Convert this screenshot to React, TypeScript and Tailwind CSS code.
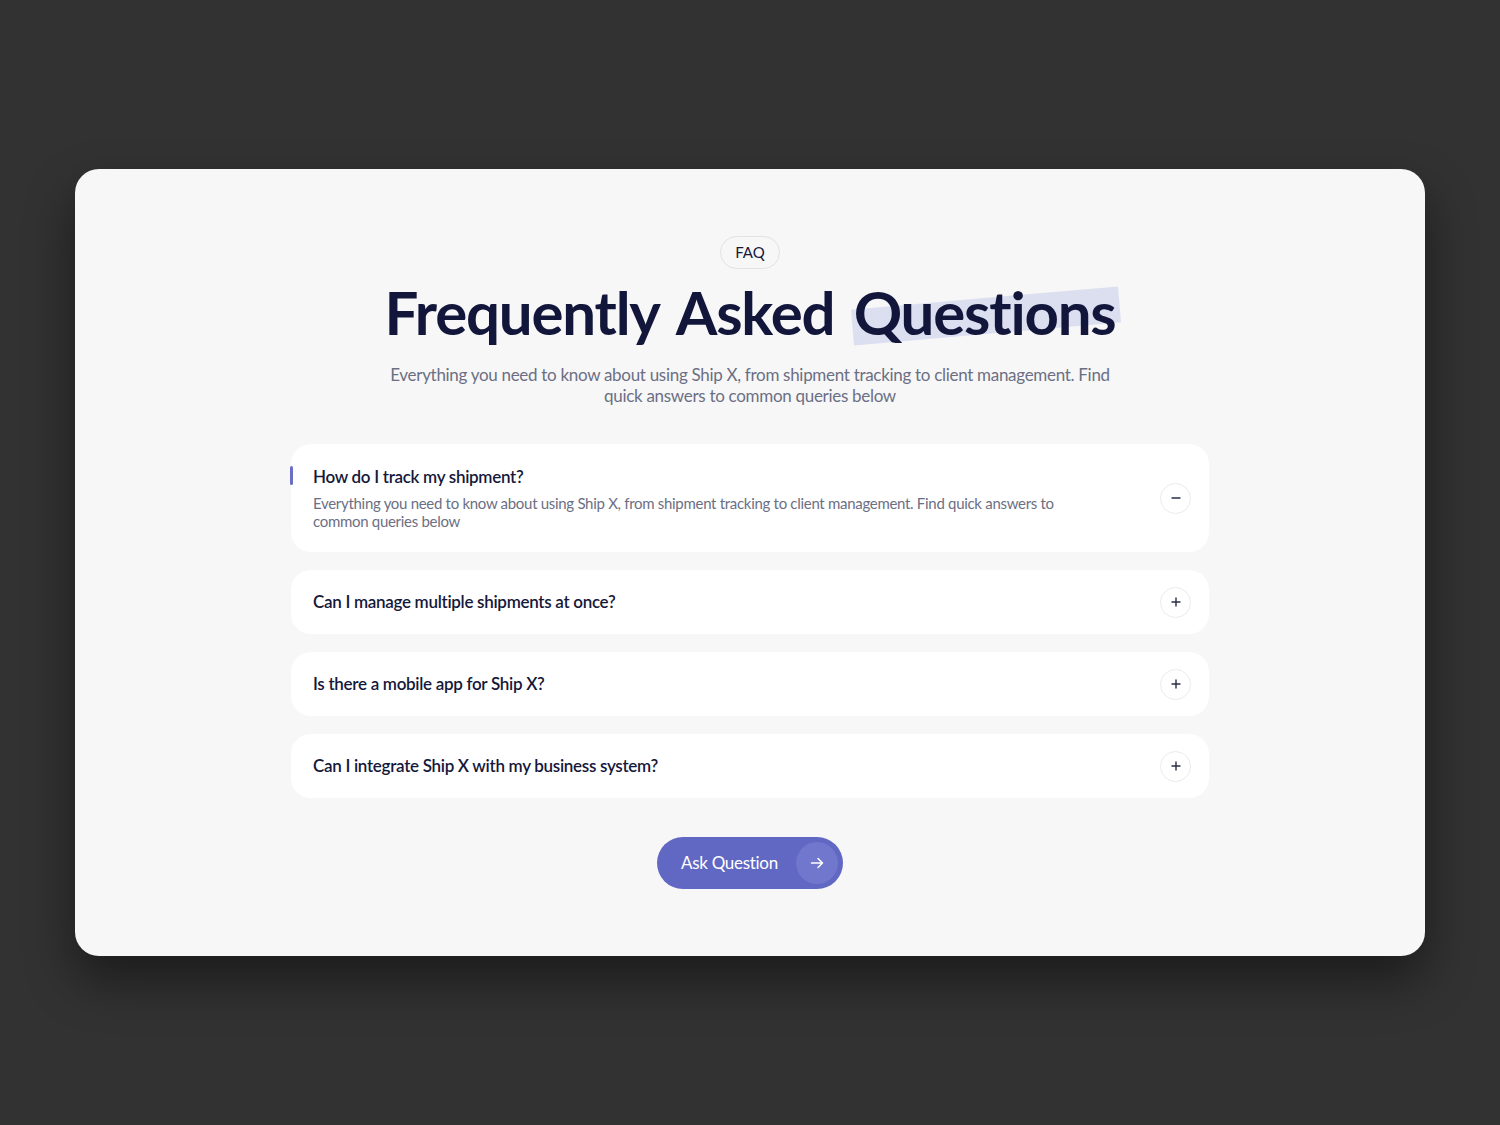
import React, { useState } from "react";

const faqs = [
  {
    q: "How do I track my shipment?",
    a: "Everything you need to know about using Ship X, from shipment tracking to client management. Find quick answers to common queries below",
  },
  { q: "Can I manage multiple shipments at once?", a: "" },
  { q: "Is there a mobile app for Ship X?", a: "" },
  { q: "Can I integrate Ship X with my business system?", a: "" },
];

function MinusIcon() {
  return (
    <svg width="12" height="12" viewBox="0 0 12 12" fill="none">
      <path d="M2 6h8" stroke="#2a2d45" strokeWidth="1.4" strokeLinecap="round" />
    </svg>
  );
}

function PlusIcon() {
  return (
    <svg width="12" height="12" viewBox="0 0 12 12" fill="none">
      <path d="M2 6h8M6 2v8" stroke="#2a2d45" strokeWidth="1.4" strokeLinecap="round" />
    </svg>
  );
}

export default function App() {
  const [open, setOpen] = useState(0);
  return (
    <div
      className="min-h-screen w-full bg-[#323232] flex items-center justify-center px-[75px]"
      style={{ fontFamily: "Lato, 'Noto Sans', sans-serif" }}
    >
      <div className="w-full bg-[#f7f7f7] rounded-[24px] shadow-[0_24px_50px_rgba(0,0,0,0.45)] pt-[67px] pb-[67px] flex flex-col items-center">
        <div className="h-[33px] px-[14px] rounded-full border border-[#e2e2e6] flex items-center text-[15px] text-[#15183a] bg-[#f7f7f7]">
          FAQ
        </div>

        <h1 className="mt-[5px] text-[60px] leading-[76px] font-bold tracking-[-1.2px] [word-spacing:6px] text-[#12163a] whitespace-nowrap">
          Frequently Asked{" "}
          <span className="relative inline-block">
            <span className="absolute left-[-2px] right-[-4px] top-[24px] h-[36px] bg-[#dcdff0] -rotate-[5deg] origin-center" />
            <span className="relative">Questions</span>
          </span>
        </h1>

        <p className="mt-[14px] w-[720px] text-center text-[17px] leading-[21px] text-[#6c6f84] tracking-[-0.3px]">
          Everything you need to know about using Ship X, from shipment tracking to client management. Find quick answers to common queries below
        </p>

        <div className="mt-[38px] w-[918px] flex flex-col gap-[18px]">
          {faqs.map((f, i) => {
            const isOpen = open === i;
            return (
              <div
                key={i}
                className={`relative bg-white rounded-[20px] flex items-center justify-between pl-[22px] pr-[18px] ${isOpen ? "py-[22px]" : "h-[64px]"}`}
              >
                {isOpen && (
                  <span className="absolute left-[-1px] top-[22px] w-[3px] h-[19px] bg-[#6a6fc6] rounded-full" />
                )}
                <div className="flex flex-col">
                  <div className="text-[17px] leading-[22px] font-semibold text-[#15183a] tracking-[-0.3px]">
                    {f.q}
                  </div>
                  {isOpen && (
                    <div className="mt-[6px] w-[760px] text-[15px] leading-[18px] text-[#6c6f84] tracking-[-0.3px]">
                      {f.a || faqs[0].a}
                    </div>
                  )}
                </div>
                <button
                  onClick={() => setOpen(isOpen ? -1 : i)}
                  className="w-[31px] h-[31px] rounded-full border border-[#ebebef] bg-white flex items-center justify-center shrink-0"
                >
                  {isOpen ? <MinusIcon /> : <PlusIcon />}
                </button>
              </div>
            );
          })}
        </div>

        <button className="mt-[39px] h-[52px] w-[186px] rounded-full bg-[#6068c4] flex items-center justify-between pl-[24px] pr-[5px]">
          <span className="text-[17px] text-white tracking-[-0.3px]">Ask Question</span>
          <span className="w-[42px] h-[42px] rounded-full bg-[#7077cc] flex items-center justify-center">
            <svg width="16" height="16" viewBox="0 0 16 16" fill="none">
              <path d="M2.5 8h11M9 3.5 13.5 8 9 12.5" stroke="white" strokeWidth="1.5" strokeLinecap="round" strokeLinejoin="round" />
            </svg>
          </span>
        </button>
      </div>
    </div>
  );
}
